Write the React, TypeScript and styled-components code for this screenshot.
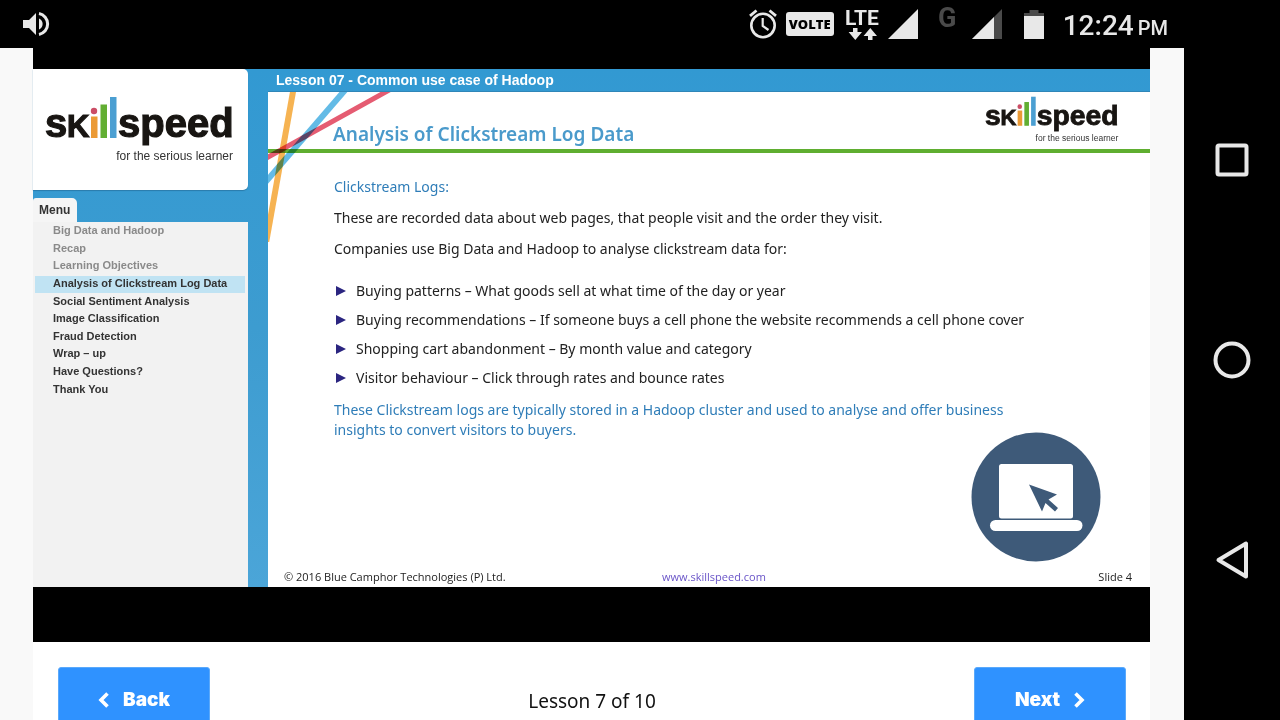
import React from "react";
import styled, { createGlobalStyle } from "styled-components";

const GlobalStyle = createGlobalStyle`
  *, *::before, *::after { box-sizing: border-box; }
  body { margin: 0; background: #000; }
  button { border: 0; padding: 0; background: none; font: inherit; color: inherit; cursor: pointer; }
  ul, h1, h2, p { margin: 0; padding: 0; }
  ul { list-style: none; }
  svg { display: block; flex: none; }
`;

const sans = `"Open Sans", "Noto Sans", sans-serif`;
const noto = `"Noto Sans", "Open Sans", sans-serif`;
const arial = `"Liberation Sans", Arial, sans-serif`;
const roboto = `Roboto, sans-serif`;

const Screen = styled.div`
  display: grid;
  grid-template-columns: minmax(0, 1fr) 96px;
  height: 100vh;
  overflow: hidden;
  background: #000;
`;

const AppColumn = styled.div`
  display: flex;
  flex-direction: column;
  min-height: 0;
`;

const StatusBar = styled.header`
  display: flex;
  align-items: center;
  justify-content: space-between;
  flex: none;
  height: 48px;
  padding: 0 16px 0 22px;
  color: #e8e8e8;
  font-family: ${roboto};
`;

const StatusIcons = styled.div`
  display: flex;
  align-items: center;
`;

const StatusItem = styled.div<{ $gap: number }>`
  margin-left: ${(p) => p.$gap}px;
`;

const VolteBadge = styled.span`
  display: block;
  width: 48px;
  border-radius: 3px;
  background: #e8e8e8;
  color: #000;
  font: 800 13px/24px ${sans};
  text-align: center;
`;

const Clock = styled.time`
  display: block;
  padding-top: 6px;
  font-size: 28px;
  font-weight: 500;
  line-height: 42px;
  white-space: nowrap;
`;

const Meridiem = styled.small`
  margin-left: 4px;
  font-size: 20px;
`;

const NavBar = styled.nav`
  display: flex;
  flex-direction: column;
  padding: 60px 0;
`;

const NavButton = styled.button`
  display: flex;
  flex: 1;
  align-items: center;
  justify-content: center;
`;

const Page = styled.main`
  flex: 1;
  min-height: 0;
  padding: 0 34px 0 33px;
  overflow: hidden;
  background: #f9f9f9;
`;

const Player = styled.section`
  padding: 21px 0 55px;
  background: #000;
`;

const Course = styled.div`
  display: grid;
  grid-template-columns: 235px minmax(0, 1fr);
  min-height: 518px;
  background: linear-gradient(#3299d2, #3d9cd0 50%, #4ba5d8);
`;

const Sidebar = styled.aside`
  display: flex;
  flex-direction: column;
  align-items: flex-start;
  padding-right: 20px;
`;

const BrandCard = styled.div`
  width: 100%;
  height: 121px;
  padding: 27px 0 0 12px;
  border-radius: 0 5px 5px 0;
  background: #fff;
  box-shadow: 0 1px 1px #2b7cab;
`;

const MenuTab = styled.h2`
  margin-top: 8px;
  padding: 0 7px 0 6px;
  border-radius: 3px 5px 0 0;
  background: #f5f5f5;
  color: #333;
  font: 700 12px/24px ${arial};
`;

const MenuPanel = styled.nav`
  flex: 1;
  width: 100%;
  background: #f2f2f2;
`;

const MenuList = styled.ul`
  display: grid;
  grid-auto-rows: 1fr;
  height: 177px;
  padding: 1px 3px 0 2px;
`;

const MenuLink = styled.a<{ $state: "seen" | "current" | "open" }>`
  display: flex;
  align-items: center;
  height: 100%;
  padding: 0 0 3px 18px;
  background: ${(p) => (p.$state === "current" ? "#c0e3f3" : "transparent")};
  color: ${(p) => (p.$state === "seen" ? "#8a8a8a" : "#333")};
  font: 700 11px/14px ${arial};
  text-decoration: none;
  white-space: nowrap;
`;

const Stage = styled.div`
  display: flex;
  flex-direction: column;
`;

const LessonTitle = styled.h1`
  padding-left: 8px;
  border-bottom: 1px solid #2f86b8;
  color: #fff;
  font: 700 14px/22px ${arial};
`;

const Slide = styled.article`
  position: relative;
  display: flex;
  flex: 1;
  flex-direction: column;
  background: #fff;
  color: #222;
  font: 440 14px/20px ${noto};
`;

const Ribbons = styled.svg`
  position: absolute;
  top: 0;
  left: 0;
  mix-blend-mode: multiply;
`;

const SlideHeader = styled.header`
  display: flex;
  align-items: center;
  justify-content: space-between;
  height: 61px;
  padding: 0 31px 0 65px;
  border-bottom: 4px solid #5fae30;
`;

const SlideTitle = styled.h2`
  padding-top: 26px;
  color: #4a9acb;
  font: 640 19px/26px ${noto};
`;

const SlideBody = styled.div`
  display: flex;
  flex: 1;
  flex-direction: column;
  padding: 24px 49px 0 66px;
`;

const Paragraph = styled.p<{ $accent?: boolean }>`
  margin-bottom: 11px;
  color: ${(p) => (p.$accent ? "#2f7db8" : "#222")};
`;

const Bullets = styled.ul`
  display: grid;
  gap: 9px;
  margin: 11px 0 12px;
`;

const Bullet = styled.li`
  display: flex;
  align-items: center;
  gap: 10px;
  padding-left: 2px;
  line-height: 20px;
`;

const Illustration = styled.div`
  align-self: flex-end;
  margin-top: -19px;
`;

const SlideFooter = styled.footer`
  display: grid;
  grid-template-columns: 378px 1fr auto;
  padding: 0 18px 2px 16px;
  font: 400 11px/16px ${sans};
`;

const SiteLink = styled.a`
  color: #6a55c8;
  text-decoration: none;
`;

const Pager = styled.nav`
  display: flex;
  align-items: flex-start;
  justify-content: space-between;
  padding: 25px 24px 25px 25px;
  background: #fff;
`;

const PagerButton = styled.button`
  display: flex;
  align-items: center;
  justify-content: center;
  gap: 14px;
  width: 152px;
  height: 65px;
  border: 1px solid #5aa9fb;
  border-radius: 3px;
  background: #2f92ff;
  color: #fff;
  font: 900 19px/24px Inter, sans-serif;
`;

const PagerLabel = styled.span`
  color: #111;
  font: 400 19px/68px ${noto};
`;

function SkillspeedLogo({ width }: { width: number }) {
  return (
    <svg width={width} viewBox="0 0 189 70" role="img" aria-label="skillspeed, for the serious learner">
      <g fill="#181512" stroke="#181512" strokeWidth="1.2" fontFamily="Liberation Sans, Arial, sans-serif" fontWeight="700">
        <text x="0" y="41" fontSize="40">s</text>
        <text x="22" y="41" fontSize="31">K</text>
        <text x="73" y="41" fontSize="40">speed</text>
      </g>
      <circle cx="49" cy="15" r="3.2" fill="#cb4d65" />
      <rect x="46" y="20.500" width="6.500" height="21.500" fill="#eb9a35" />
      <rect x="55.500" y="8.500" width="6.500" height="33.500" fill="#62ae32" />
      <rect x="65" y="1" width="6.500" height="41" fill="#4b9fd2" />
      <text x="188" y="64" textAnchor="end" fontSize="12" fill="#333" fontFamily="Liberation Sans, Arial, sans-serif">
        for the serious learner
      </text>
    </svg>
  );
}

function LaptopIcon() {
  return (
    <svg width="130" height="130" viewBox="0 0 130 130" aria-hidden="true">
      <circle cx="65" cy="65" r="64.500" fill="#3e5a79" />
      <rect x="28" y="32" width="74" height="54.500" rx="2.500" fill="#fff" />
      <rect x="19" y="88" width="92.500" height="11" rx="5.500" fill="#fff" />
      <path d="M58 52.500 L86 62.500 L77.500 67.500 L87 76 L84 79.500 L74.500 71 L71 79.500 Z" fill="#3e5a79" />
    </svg>
  );
}

function SignalIcon({ partial }: { partial?: boolean }) {
  return (
    <svg width="30" height="30" viewBox="0 0 30 30" aria-hidden="true">
      <path d="M30 0 V30 H0 Z" fill={partial ? "#4a4a4a" : "#e8e8e8"} />
      {partial && <path d="M22 8 V30 H0 Z" fill="#e8e8e8" />}
    </svg>
  );
}

const lessons: { title: string; state: "seen" | "current" | "open" }[] = [
  { title: "Big Data and Hadoop", state: "seen" },
  { title: "Recap", state: "seen" },
  { title: "Learning Objectives", state: "seen" },
  { title: "Analysis of Clickstream Log Data", state: "current" },
  { title: "Social Sentiment Analysis", state: "open" },
  { title: "Image Classification", state: "open" },
  { title: "Fraud Detection", state: "open" },
  { title: "Wrap – up", state: "open" },
  { title: "Have Questions?", state: "open" },
  { title: "Thank You", state: "open" },
];

const bullets = [
  "Buying patterns – What goods sell at what time of the day or year",
  "Buying recommendations – If someone buys a cell phone the website recommends a cell phone cover",
  "Shopping cart abandonment – By month value and category",
  "Visitor behaviour – Click through rates and bounce rates",
];

export default function App() {
  return (
    <>
      <GlobalStyle />
      <Screen>
        <AppColumn>
          <StatusBar>
            <svg width="28" height="28" viewBox="0 0 28 28" fill="#e8e8e8" aria-hidden="true">
              <path d="M1 10 H7 L14 3 V25 L7 18 H1 Z" />
              <path d="M17 8.500 a6 6 0 0 1 0 11 Z" />
              <path d="M17 3.500 a10.700 10.700 0 0 1 0 21" fill="none" stroke="#e8e8e8" strokeWidth="3" />
            </svg>
            <StatusIcons>
              <svg width="28" height="30" viewBox="0 0 28 30" fill="none" stroke="#e8e8e8" aria-hidden="true">
                <circle cx="14" cy="16.500" r="11.700" strokeWidth="2.600" />
                <path d="M13.700 9 V17 L19.500 21" strokeWidth="2.200" />
                <path d="M1 6.800 L7.500 1.500 M27 6.800 L20.500 1.500" strokeWidth="2.800" />
              </svg>
              <StatusItem $gap={9}>
                <VolteBadge>VOLTE</VolteBadge>
              </StatusItem>
              <StatusItem $gap={11}>
                <svg width="36" height="34" viewBox="0 0 36 34" fill="#e8e8e8" role="img" aria-label="LTE">
                  <text x="0" y="18" fontSize="21" fontWeight="700" fontFamily="Roboto, sans-serif">LTE</text>
                  <path d="M8 21 h4.500 v4 h4.500 l-6.700 8 l-6.700 -8 h4.400 Z" />
                  <path d="M23 33 h4.500 v-4 h4.500 l-6.700 -8 l-6.700 8 h4.400 Z" />
                </svg>
              </StatusItem>
              <StatusItem $gap={7}>
                <SignalIcon />
              </StatusItem>
              <StatusItem $gap={20}>
                <svg width="22" height="48" viewBox="0 0 22 48" fill="#4a4a4a" role="img" aria-label="G">
                  <text x="0" y="27" fontSize="27" fontWeight="700" fontFamily="Roboto, sans-serif">G</text>
                </svg>
              </StatusItem>
              <StatusItem $gap={12}>
                <SignalIcon partial />
              </StatusItem>
              <StatusItem $gap={22}>
                <svg width="20" height="29" viewBox="0 0 20 29" aria-hidden="true">
                  <path d="M5.500 0 h9 v3 h5.500 v4 h-20 v-4 h5.500 Z" fill="#4a4a4a" />
                  <rect y="6" width="20" height="23" fill="#e8e8e8" />
                </svg>
              </StatusItem>
              <StatusItem $gap={19}>
                <Clock>
                  12:24<Meridiem>PM</Meridiem>
                </Clock>
              </StatusItem>
            </StatusIcons>
          </StatusBar>

          <Page>
            <Player>
              <Course>
                <Sidebar>
                  <BrandCard>
                    <SkillspeedLogo width={189} />
                  </BrandCard>
                  <MenuTab>Menu</MenuTab>
                  <MenuPanel aria-label="Lesson menu">
                    <MenuList>
                      {lessons.map((l) => (
                        <li key={l.title}>
                          <MenuLink href="#" $state={l.state}>{l.title}</MenuLink>
                        </li>
                      ))}
                    </MenuList>
                  </MenuPanel>
                </Sidebar>

                <Stage>
                  <LessonTitle>Lesson 07 - Common use case of Hadoop</LessonTitle>
                  <Slide>
                    <SlideHeader>
                      <SlideTitle>Analysis of Clickstream Log Data</SlideTitle>
                      <SkillspeedLogo width={134} />
                    </SlideHeader>
                    <Ribbons width="126" height="150" viewBox="0 0 126 150" fill="none" aria-hidden="true">
                      <path d="M25.500 -3 L-2 151" stroke="#f6b352" strokeWidth="6" />
                      <path d="M78 -3 L-5 93" stroke="#63bbe6" strokeWidth="6" style={{ mixBlendMode: "multiply" }} />
                      <path d="M123 -3 L-5 68" stroke="#e55c72" strokeWidth="5" style={{ mixBlendMode: "multiply" }} />
                    </Ribbons>
                    <SlideBody>
                      <Paragraph $accent>Clickstream Logs:</Paragraph>
                      <Paragraph>
                        These are recorded data about web pages, that people visit and the order they visit.
                      </Paragraph>
                      <Paragraph>
                        Companies use Big Data and Hadoop to analyse clickstream data for:
                      </Paragraph>
                      <Bullets>
                        {bullets.map((b) => (
                          <Bullet key={b}>
                            <svg width="10" height="10" viewBox="0 0 10 10" fill="#2b2580" aria-hidden="true">
                              <path d="M0 0 L10 5 L0 10 Z" />
                            </svg>
                            {b}
                          </Bullet>
                        ))}
                      </Bullets>
                      <Paragraph $accent>
                        These Clickstream logs are typically stored in a Hadoop cluster and used to analyse and offer business
                        <br />
                        insights to convert visitors to buyers.
                      </Paragraph>
                      <Illustration>
                        <LaptopIcon />
                      </Illustration>
                    </SlideBody>
                    <SlideFooter>
                      <span>© 2016 Blue Camphor Technologies (P) Ltd.</span>
                      <span>
                        <SiteLink href="#">www.skillspeed.com</SiteLink>
                      </span>
                      <span>Slide 4</span>
                    </SlideFooter>
                  </Slide>
                </Stage>
              </Course>
            </Player>

            <Pager aria-label="Lessons">
              <PagerButton type="button">
                <svg width="11" height="16" viewBox="0 0 11 16" fill="none" stroke="#fff" strokeWidth="3.600" aria-hidden="true">
                  <path d="M9.500 1.500 L3 8 L9.500 14.500" />
                </svg>
                Back
              </PagerButton>
              <PagerLabel>Lesson 7 of 10</PagerLabel>
              <PagerButton type="button">
                Next
                <svg width="11" height="16" viewBox="0 0 11 16" fill="none" stroke="#fff" strokeWidth="3.600" aria-hidden="true">
                  <path d="M1.500 1.500 L8 8 L1.500 14.500" />
                </svg>
              </PagerButton>
            </Pager>
          </Page>
        </AppColumn>

        <NavBar aria-label="System">
          <NavButton type="button" aria-label="Recent apps">
            <svg width="40" height="40" viewBox="0 0 40 40" fill="none" stroke="#e8e8e8" strokeWidth="4">
              <rect x="5.500" y="5.500" width="29" height="29" rx="1.500" />
            </svg>
          </NavButton>
          <NavButton type="button" aria-label="Home">
            <svg width="40" height="40" viewBox="0 0 40 40" fill="none" stroke="#e8e8e8" strokeWidth="4">
              <circle cx="20" cy="20" r="16.500" />
            </svg>
          </NavButton>
          <NavButton type="button" aria-label="Back">
            <svg width="40" height="40" viewBox="0 0 40 40" fill="none" stroke="#e8e8e8" strokeWidth="4" strokeLinejoin="round">
              <path d="M34 3.500 V36.500 L6.500 20 Z" />
            </svg>
          </NavButton>
        </NavBar>
      </Screen>
    </>
  );
}
